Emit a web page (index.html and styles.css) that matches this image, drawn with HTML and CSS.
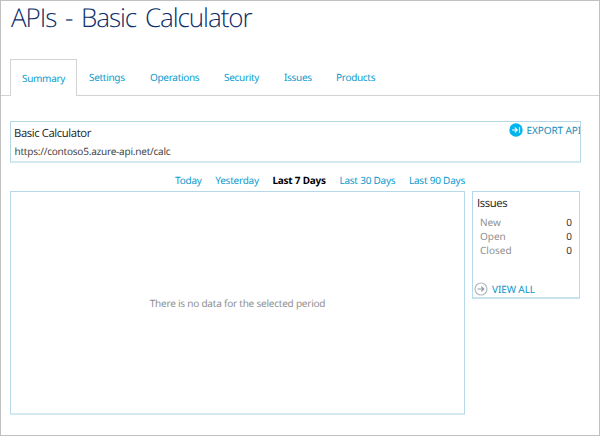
FILE: index.html
```html
<!DOCTYPE html>
<html lang="en">
<head>
<meta charset="utf-8">
<title>APIs - Basic Calculator</title>
<link rel="stylesheet" href="styles.css">
</head>
<body>
<div class="page">
  <h1 class="title">APIs - Basic Calculator</h1>
  <nav class="tabs">
    <a class="tab tab-active">Summary</a>
    <a class="tab">Settings</a>
    <a class="tab">Operations</a>
    <a class="tab">Security</a>
    <a class="tab">Issues</a>
    <a class="tab">Products</a>
  </nav>
  <main class="content">
    <section class="api-card">
      <div>
        <h2 class="heading">Basic Calculator</h2>
        <p class="url">https://contoso5.azure-api.net/calc</p>
      </div>
      <a class="action export">
        <svg class="icon" viewBox="0 0 14 14"><circle cx="7" cy="7" r="6.7" fill="#00b4f0"/><path d="M3 7h5M5.8 4.6L8.2 7 5.8 9.4M10.5 4.2v5.6" fill="none" stroke="#fff" stroke-width="1.2"/></svg>
        <span>EXPORT API</span>
      </a>
    </section>
    <div class="report">
      <div class="report-main">
        <nav class="periods">
          <a>Today</a><a>Yesterday</a><a class="current">Last 7 Days</a><a>Last 30 Days</a><a>Last 90 Days</a>
        </nav>
        <section class="chart"><span>There is no data for the selected period</span></section>
      </div>
      <aside class="issues">
        <h2 class="heading">Issues</h2>
        <dl class="counts">
          <div><dt>New</dt><dd>0</dd></div>
          <div><dt>Open</dt><dd>0</dd></div>
          <div><dt>Closed</dt><dd>0</dd></div>
        </dl>
        <a class="action view-all">
          <svg class="icon" viewBox="0 0 14 14"><circle cx="7" cy="7" r="6" fill="none" stroke="#b5bac1" stroke-width="1.2"/><path d="M3.5 7h6M7.3 4.6L9.8 7 7.3 9.4" fill="none" stroke="#8d98a6" stroke-width="1.2"/></svg>
          <span>VIEW ALL</span>
        </a>
      </aside>
    </div>
  </main>
</div>
</body>
</html>
```
FILE: styles.css
```css
* { box-sizing: border-box; }
body { margin: 0; background: #fff; font-family: "Noto Sans", "Open Sans", sans-serif; font-size: 10px; line-height: 14px; letter-spacing: -0.22px; text-rendering: geometricPrecision; }
h1, h2, p, dl, dd { margin: 0; font-weight: 400; }
.page { height: 436px; border: 1px solid #c0c0c0; overflow: hidden; }
.title { height: 58px; padding-left: 10px; color: #0b2d69; font: 300 26px/32px "Open Sans", sans-serif; letter-spacing: -1.05px; word-spacing: 3px; white-space: nowrap; }
.tabs { display: flex; height: 37px; padding-left: 9px; border-bottom: 1px solid #d3d3d3; letter-spacing: -0.3px; }
.tab { flex: none; width: 60px; height: 37px; padding: 11px 0 0 12px; color: #0a9bcd; white-space: nowrap; }
.tab:nth-child(2) { width: 61px; }
.tab:nth-child(3) { width: 74px; }
.tab:nth-child(5) { width: 52px; }
.tab-active { width: 67px; padding: 11px 0 0 11px; border: 1px solid #d3d3d3; border-bottom: 0; background: #fff; }
.content { padding: 25px 18px 0 9px; }
.api-card { display: flex; justify-content: space-between; height: 42px; padding: 1px 0 0 4px; border: 1px solid #b5d9e8; border-bottom: 2px solid #d3eaf2; overflow: hidden; }
.heading { color: #222; font: 400 11.3px/22px "Open Sans", sans-serif; letter-spacing: -0.4px; }
.api-card .heading { margin-left: -1px; }
.url { margin-left: -0.5px; color: #444; line-height: 12px; }
.action { display: flex; color: #0a93cb; gap: 4px; line-height: 14px; white-space: nowrap; letter-spacing: -0.1px; }
.icon { width: 14px; height: 14px; flex: none; }
.export { color: #168ebc; margin-right: -1px; }
.report { display: flex; gap: 7px; }
.report-main { width: 455px; }
.periods { display: flex; justify-content: flex-end; gap: 13.5px; height: 28px; padding-top: 10px; color: #0a9bcd; white-space: nowrap; }
.current { color: #000; font-weight: 700; }
.chart { display: grid; place-items: center; height: 224px; border: 1px solid #b5d9e8; border-bottom: 2px solid #d3eaf2; color: #909090; }
.issues { width: 108px; height: 108px; margin-top: 28px; padding: 1px 0 0 4px; border: 1px solid #b5d9e8; border-bottom: 2px solid #c6e3ee; }
.counts { height: 67px; padding: 0 7px 0 3px; color: #909090; letter-spacing: 0; }
.counts div { display: flex; justify-content: space-between; height: 14.2px; }
.counts dd { color: #333; }
.view-all { margin-left: -3px; }
```
